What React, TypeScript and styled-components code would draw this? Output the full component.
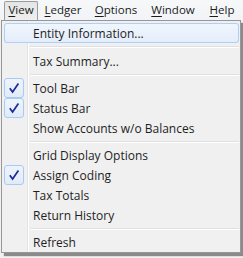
import React from "react";
import styled, { createGlobalStyle } from "styled-components";

const Global = createGlobalStyle`
  html, body { margin: 0; padding: 0; background: #f0f0f0; }
  body { font-family: "Segoe UI", "Open Sans", "Noto Sans", sans-serif; font-size: 12px; color: #1e1e1e; }
`;

const Page = styled.div`
  width: 243px;
  height: 258px;
  overflow: hidden;
  display: flex;
  flex-direction: column;
`;

const MenuBar = styled.div`
  height: 20px;
  display: flex;
  align-items: flex-end;
  padding-left: 4px;
  background: linear-gradient(#f7f8fa, #f1f3f6);
`;

const BarItem = styled.div<{ $active?: boolean; $w: number }>`
  width: ${(p) => p.$w}px;
  flex: none;
  height: 19px;
  display: flex;
  align-items: center;
  justify-content: center;
  box-sizing: border-box;
  line-height: 1;
  font-size: 11.5px;
  color: #1a1a1a;
  border: 1px solid ${(p) => (p.$active ? "#9c9c9c" : "transparent")};
  border-bottom: none;
  border-radius: 2px 2px 0 0;
  background: ${(p) => (p.$active ? "linear-gradient(#e4e5e6, #eeeeee)" : "transparent")};
  position: relative;
  z-index: 2;
  padding-bottom: 2px;
  u { text-decoration-thickness: 1px; text-underline-offset: 2px; }
`;

const Dropdown = styled.div`
  margin-left: 1px;
  width: 240px;
  box-sizing: border-box;
  border: 1px solid #979797;
  padding: 2px 1px 0 2px;
  background:
    linear-gradient(to right, transparent 25px, #e2e3e3 25px, #e2e3e3 26px, #ffffff 26px, #ffffff 27px, transparent 27px),
    #f0f0f0;
  box-shadow: 3px 3px 1px rgba(0, 0, 0, 0.42);
  display: flex;
  flex-direction: column;
`;

const Item = styled.div<{ $hover?: boolean }>`
  height: 20px;
  box-sizing: border-box;
  display: flex;
  align-items: center;
  border-radius: 3px;
  box-shadow: ${(p) => (p.$hover ? "inset 0 0 0 1px #aecff7" : "none")};
  background: ${(p) => (p.$hover ? "linear-gradient(#f1f6fd, #e3edfa)" : "transparent")};
`;

const CheckCell = styled.div`
  width: 27px;
  height: 20px;
  flex: none;
  display: flex;
  align-items: center;
`;

const CheckBox = styled.div`
  width: 20px;
  height: 20px;
  box-sizing: border-box;
  border: 1px solid #a8caf3;
  border-radius: 3px;
  background: linear-gradient(#eef4fc, #e1ebf8);
  display: flex;
  align-items: center;
  justify-content: center;
`;

const Label = styled.span`
  padding-left: 2px;
  white-space: nowrap;
  color: #1e1e1e;
`;

const Separator = styled.div<{ $h: number }>`
  height: ${(p) => p.$h}px;
  display: flex;
  align-items: center;
  padding-left: 26px;
  &::after {
    content: "";
    flex: 1;
    height: 1px;
    background: #e0e0e0;
    border-bottom: 1px solid #ffffff;
  }
`;

const Check = () => (
  <svg width="12" height="12" viewBox="0 0 12 12">
    <path d="M1.8 6.2 L4.6 10 L10.4 1.6" fill="none" stroke="#1b2a9e" strokeWidth="1.7" strokeLinejoin="miter" />
  </svg>
);

type Entry = { label?: string; checked?: boolean; hover?: boolean; sep?: number };

const entries: Entry[] = [
  { label: "Entity Information...", hover: true },
  { sep: 8 },
  { label: "Tax Summary..." },
  { sep: 7 },
  { label: "Tool Bar", checked: true },
  { label: "Status Bar", checked: true },
  { label: "Show Accounts w/o Balances" },
  { sep: 7 },
  { label: "Grid Display Options" },
  { label: "Assign Coding", checked: true },
  { label: "Tax Totals" },
  { label: "Return History" },
  { sep: 7 },
  { label: "Refresh" },
];

const bar = [
  { key: "V", rest: "iew", w: 34, active: true },
  { key: "L", rest: "edger", w: 50 },
  { key: "O", rest: "ptions", w: 56 },
  { key: "W", rest: "indow", w: 58 },
  { key: "H", rest: "elp", w: 40 },
];

export default function App() {
  return (
    <Page>
      <Global />
      <MenuBar>
        {bar.map((b) => (
          <BarItem key={b.key} $active={b.active} $w={b.w}>
            <span>
              <u>{b.key}</u>
              {b.rest}
            </span>
          </BarItem>
        ))}
      </MenuBar>
      <Dropdown>
        {entries.map((e, i) =>
          e.sep ? (
            <Separator key={i} $h={e.sep} />
          ) : (
            <Item key={i} $hover={e.hover}>
              <CheckCell>
                {e.checked && (
                  <CheckBox>
                    <Check />
                  </CheckBox>
                )}
              </CheckCell>
              <Label>{e.label}</Label>
            </Item>
          )
        )}
      </Dropdown>
    </Page>
  );
}
